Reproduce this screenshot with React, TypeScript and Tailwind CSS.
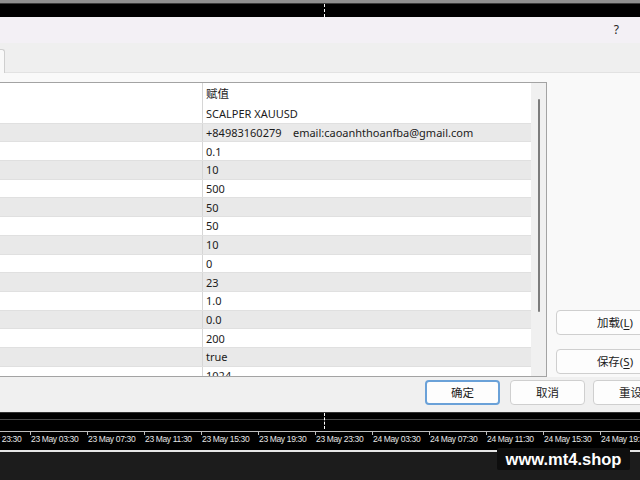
const values = [
  'SCALPER XAUUSD',
  '+84983160279    email:caoanhthoanfba@gmail.com',
  '0.1',
  '10',
  '500',
  '50',
  '50',
  '10',
  '0',
  '23',
  '1.0',
  '0.0',
  '200',
  'true',
  '1024',
]

const times = [
  '22 May 23:30',
  '23 May 03:30',
  '23 May 07:30',
  '23 May 11:30',
  '23 May 15:30',
  '23 May 19:30',
  '23 May 23:30',
  '24 May 03:30',
  '24 May 07:30',
  '24 May 11:30',
  '24 May 15:30',
  '24 May 19:30',
]

function Crosshair({ className }: { className: string }) {
  return <div className={`absolute left-[324px] w-0 border-l border-dashed border-white ${className}`} />
}

function ParamTable() {
  return (
    <div className="w-[547px] h-[295px] shrink-0 flex bg-white border-t border-r border-b border-[#a3a3a3]">
      <div className="w-[531px] flex flex-col overflow-hidden">
        <div className="h-[22px] shrink-0 flex items-center">
          <div className="w-[203px] h-full border-r border-[#d6d6d6]" />
          <div className="pl-[3px] text-[11.5px]">赋值</div>
        </div>
        {values.map((v, i) => (
          <div
            key={i}
            className={`h-[18.7px] shrink-0 flex items-center border-b border-[#e0e0e0] ${i % 2 === 1 ? 'bg-[#e9e9e9]' : 'bg-white'}`}
          >
            <div className="w-[203px] h-full shrink-0 border-r border-[#d6d6d6]" />
            <div className="pl-[3px] whitespace-pre leading-none">{v}</div>
          </div>
        ))}
      </div>
      <div className="w-[15px] bg-[#f0f0f0] pt-[16px] flex justify-center">
        <div className="w-[2px] h-[213px] bg-[#7c7c7c] rounded-full" />
      </div>
    </div>
  )
}

function Button({ children, primary, className = '' }: { children: React.ReactNode; primary?: boolean; className?: string }) {
  return (
    <div
      className={`h-[25px] shrink-0 flex items-center justify-center rounded-[4px] bg-[#fdfdfd] text-[11.5px] ${
        primary ? 'border-2 border-[#6aa1d8]' : 'border border-[#cfcfcf]'
      } ${className}`}
    >
      {children}
    </div>
  )
}

export default function App() {
  return (
    <div
      className="relative w-[640px] h-[480px] overflow-hidden flex flex-col text-[11px] text-[#1b1b1b]"
      style={{ fontFamily: '"Noto Sans", "Noto Sans CJK SC", sans-serif' }}
    >
      {/* chart strip above the dialog */}
      <div className="h-[3px] shrink-0 bg-[#8f8f8f]" />
      <div className="h-[1px] shrink-0 bg-[#3a3a3a]" />
      <div className="relative h-[13px] shrink-0 bg-black">
        <Crosshair className="top-0 h-[13px]" />
      </div>

      {/* dialog */}
      <div className="h-[26px] shrink-0 bg-[#f3f0f5] flex items-center justify-end pr-[21px]">
        <span className="text-[12px] text-[#222]">?</span>
      </div>
      <div className="h-[30px] shrink-0 bg-[#efefef] flex items-end">
        <div className="w-[5px] h-[24px] bg-[#f9f9f9] border-t border-r border-[#cfcfcf] rounded-tr-[3px]" />
        <div className="flex-1 border-b border-[#e2e2e2]" />
      </div>
      <div className="h-[304px] shrink-0 bg-[#f9f9f9] flex pt-[9px]">
        <ParamTable />
        <div className="flex-1 flex flex-col pl-[9px] pt-[228px] gap-[14px]">
          <Button className="w-[118px] h-[24px]">
            加载(<span className="underline underline-offset-2">L</span>)
          </Button>
          <Button className="w-[118px] h-[24px]">
            保存(<span className="underline underline-offset-2">S</span>)
          </Button>
        </div>
      </div>
      <div className="h-[35px] shrink-0 bg-[#f0f0f0] flex pt-[3px] pl-[425px]">
        <Button primary className="w-[75px]">确定</Button>
        <Button className="w-[75px] ml-[10px]">取消</Button>
        <Button className="w-[75px] ml-[8px]">重设</Button>
      </div>

      {/* chart time axis */}
      <div className="relative h-[40px] shrink-0 bg-black flex flex-col">
        <div className="h-[1px] bg-[#333]" />
        <div className="h-[6px]" />
        <div className="h-[1px] bg-[#4a4a4a]" />
        <div className="h-[11px]" />
        <div className="h-[1px] bg-[#bdbdbd]" />
        <div
          className="h-[18px] flex ml-[-27px] text-[8.5px] leading-[9px] tracking-[-0.35px] text-[#e6e6e6]"
          style={{ fontFamily: '"Liberation Sans", sans-serif' }}
        >
          {times.map((t) => (
            <div key={t} className="w-[57px] shrink-0 flex flex-col">
              <div className="w-[1px] h-[3px] bg-[#bdbdbd]" />
              <div className="pl-[1px] whitespace-nowrap">{t}</div>
            </div>
          ))}
        </div>
        <div className="h-[2px] bg-[#e6e6e6]" />
        <Crosshair className="top-[1px] h-[16px]" />
      </div>
      <div className="flex-1 bg-[#1c1c1c]" />

      <div
        className="absolute left-[497px] top-[448px] w-[133px] h-[22px] bg-[#0e0e0e] rounded-[2px] flex items-center justify-center text-white font-bold text-[16.5px]"
        style={{ fontFamily: '"Liberation Sans", sans-serif' }}
      >
        www.mt4.shop
      </div>
    </div>
  )
}
